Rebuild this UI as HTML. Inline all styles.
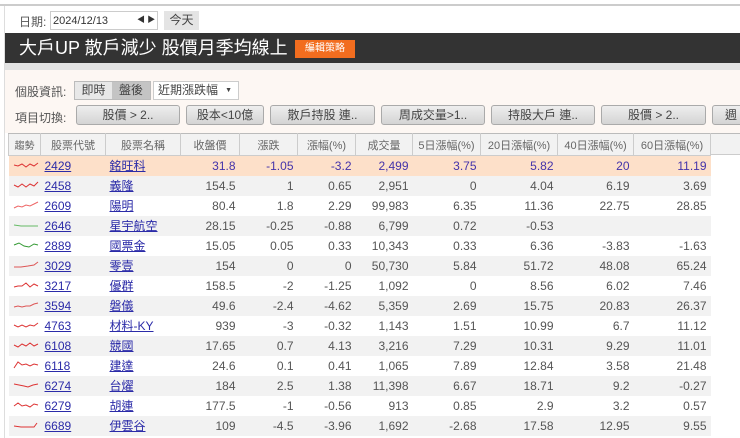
<!DOCTYPE html>
<html><head><meta charset="utf-8">
<style>
*{margin:0;padding:0;box-sizing:border-box}
body{width:740px;height:438px;overflow:hidden;background:#fff;font-family:"Liberation Sans","Noto Sans CJK TC",sans-serif;position:relative;color:#555}
.abs{position:absolute}
.btn{position:absolute;top:105px;height:20px;border:1px solid #aaa;border-radius:3px;background:linear-gradient(#eee,#d4d4d4);font-size:12px;color:#444;text-align:center;line-height:18px}
table{position:absolute;left:8px;top:133px;border-collapse:collapse;font-size:12px;table-layout:fixed;width:702px}
td,th{height:20px;padding:0 4px;white-space:nowrap;overflow:hidden}
th{font-weight:normal;color:#666;background:#f2f2f2;border:1px solid #ccc;border-top:1px solid #bbb;height:22px;text-align:center;font-size:11px;padding:0 1px}
td{text-align:right;color:#555}
td.c{text-align:left}
a{color:#2b2ba8;text-decoration:underline}
tr.g td{background:#f2f2f2}
tr.h td{background:#fde0c9;color:#4433aa}
</style></head><body>
<div class="abs" style="left:0;top:4px;width:740px;height:2px;background:#ccc"></div>
<div class="abs" style="left:4px;top:6px;width:1px;height:432px;background:#ddd"></div>
<div class="abs" style="left:19px;top:13px;font-size:12px;color:#555">日期:</div>
<div class="abs" style="left:50px;top:11px;width:108px;height:19px;border:1px solid #ccc;font-size:11px;color:#333;padding:3px 2px">2024/12/13<span style="position:absolute;left:86px;top:2px;font-size:8px">◀ ▶</span></div>
<div class="abs" style="left:164px;top:11px;width:35px;height:19px;background:#e4e4e4;font-size:12px;color:#444;text-align:center;line-height:19px">今天</div>
<div class="abs" style="left:5px;top:33px;width:735px;height:30px;background:#333"></div>
<div class="abs" style="left:19px;top:37px;font-size:18px;color:#fff;line-height:22px">大戶UP 散戶減少 股價月季均線上</div>
<div class="abs" style="left:295px;top:40px;width:60px;height:18px;background:#f26d1f;font-size:10px;color:#fff;text-align:center;line-height:18px">編輯策略</div>
<div class="abs" style="left:5px;top:63px;width:735px;height:7px;background:#e2e2e2"></div>
<div class="abs" style="left:5px;top:70px;width:735px;height:63px;background:#fdf7f3"></div>
<div class="abs" style="left:15px;top:83px;font-size:12px;color:#555">個股資訊:</div>
<div class="abs" style="left:74px;top:81px;width:77px;height:19px;border:1px solid #bbb;background:#e8e8e8;font-size:12px;color:#444;line-height:17px"><span style="display:inline-block;width:37px;text-align:center">即時</span><span style="display:inline-block;width:38px;text-align:center;background:#c4c4c4">盤後</span></div>
<div class="abs" style="left:153px;top:81px;width:86px;height:19px;border:1px solid #ccc;background:#fff;font-size:12px;color:#444;line-height:17px;padding-left:4px">近期漲跌幅<span style="position:absolute;right:6px;font-size:7px">▼</span></div>
<div class="abs" style="left:15px;top:109px;font-size:12px;color:#555">項目切換:</div>
<div class="btn" style="left:76px;width:104px">股價 &gt; 2..</div>
<div class="btn" style="left:186px;width:78px">股本&lt;10億</div>
<div class="btn" style="left:270px;width:105px">散戶持股 連..</div>
<div class="btn" style="left:381px;width:104px">周成交量&gt;1..</div>
<div class="btn" style="left:491px;width:104px">持股大戶 連..</div>
<div class="btn" style="left:601px;width:105px">股價 &gt; 2..</div>
<div class="btn" style="left:712px;width:40px;text-align:left;padding-left:12px">週</div>
<div class="abs" style="left:710px;top:133px;width:30px;height:22px;background:#f2f2f2;border-top:1px solid #bbb;border-bottom:1px solid #ccc"></div>
<table>
<colgroup><col style="width:32px"><col style="width:65px"><col style="width:75px"><col style="width:59px"><col style="width:58px"><col style="width:58px"><col style="width:57px"><col style="width:68px"><col style="width:77px"><col style="width:76px"><col style="width:77px"></colgroup>
<tr><th style="font-size:10px">趨勢</th><th>股票代號</th><th>股票名稱</th><th>收盤價</th><th>漲跌</th><th>漲幅(%)</th><th>成交量</th><th>5日漲幅(%)</th><th>20日漲幅(%)</th><th>40日漲幅(%)</th><th>60日漲幅(%)</th></tr>
<tr class="h"><td class="c"><svg width="26" height="10"><polyline fill="none" stroke="#d33" points="1,5 5,6 9,4 13,7 17,4 21,6 25,3"/></svg></td><td class="c"><a>2429</a></td><td class="c"><a>銘旺科</a></td><td>31.8</td><td>-1.05</td><td>-3.2</td><td>2,499</td><td>3.75</td><td>5.82</td><td>20</td><td>11.19</td></tr>
<tr class="g"><td class="c"><svg width="26" height="10"><polyline fill="none" stroke="#d33" points="1,5 5,7 9,4 13,7 17,4 21,6 25,2"/></svg></td><td class="c"><a>2458</a></td><td class="c"><a>義隆</a></td><td>154.5</td><td>1</td><td>0.65</td><td>2,951</td><td>0</td><td>4.04</td><td>6.19</td><td>3.69</td></tr>
<tr><td class="c"><svg width="26" height="10"><polyline fill="none" stroke="#e66" points="1,8 5,6 9,7 13,5 17,6 21,4 25,2"/></svg></td><td class="c"><a>2609</a></td><td class="c"><a>陽明</a></td><td>80.4</td><td>1.8</td><td>2.29</td><td>99,983</td><td>6.35</td><td>11.36</td><td>22.75</td><td>28.85</td></tr>
<tr class="g"><td class="c"><svg width="26" height="10"><polyline fill="none" stroke="#6b6" points="1,5 8,6 15,6 25,6"/></svg></td><td class="c"><a>2646</a></td><td class="c"><a>星宇航空</a></td><td>28.15</td><td>-0.25</td><td>-0.88</td><td>6,799</td><td>0.72</td><td>-0.53</td><td></td><td></td></tr>
<tr><td class="c"><svg width="26" height="10"><polyline fill="none" stroke="#393" points="1,5 6,3 11,6 16,7 21,4 25,5"/></svg></td><td class="c"><a>2889</a></td><td class="c"><a>國票金</a></td><td>15.05</td><td>0.05</td><td>0.33</td><td>10,343</td><td>0.33</td><td>6.36</td><td>-3.83</td><td>-1.63</td></tr>
<tr class="g"><td class="c"><svg width="26" height="10"><polyline fill="none" stroke="#d55" points="1,7 8,7 15,6 21,5 25,2"/></svg></td><td class="c"><a>3029</a></td><td class="c"><a>零壹</a></td><td>154</td><td>0</td><td>0</td><td>50,730</td><td>5.84</td><td>51.72</td><td>48.08</td><td>65.24</td></tr>
<tr><td class="c"><svg width="26" height="10"><polyline fill="none" stroke="#d33" points="1,7 5,6 9,6 13,3 17,7 21,4 25,6"/></svg></td><td class="c"><a>3217</a></td><td class="c"><a>優群</a></td><td>158.5</td><td>-2</td><td>-1.25</td><td>1,092</td><td>0</td><td>8.56</td><td>6.02</td><td>7.46</td></tr>
<tr class="g"><td class="c"><svg width="26" height="10"><polyline fill="none" stroke="#d55" points="1,7 5,6 9,7 13,6 17,6 21,4 25,3"/></svg></td><td class="c"><a>3594</a></td><td class="c"><a>磐儀</a></td><td>49.6</td><td>-2.4</td><td>-4.62</td><td>5,359</td><td>2.69</td><td>15.75</td><td>20.83</td><td>26.37</td></tr>
<tr><td class="c"><svg width="26" height="10"><polyline fill="none" stroke="#d33" points="1,5 5,7 9,5 13,7 17,5 21,6 25,3"/></svg></td><td class="c"><a>4763</a></td><td class="c"><a>材料-KY</a></td><td>939</td><td>-3</td><td>-0.32</td><td>1,143</td><td>1.51</td><td>10.99</td><td>6.7</td><td>11.12</td></tr>
<tr class="g"><td class="c"><svg width="26" height="10"><polyline fill="none" stroke="#d33" points="1,5 5,7 9,4 13,6 17,3 21,6 25,4"/></svg></td><td class="c"><a>6108</a></td><td class="c"><a>競國</a></td><td>17.65</td><td>0.7</td><td>4.13</td><td>3,216</td><td>7.29</td><td>10.31</td><td>9.29</td><td>11.01</td></tr>
<tr><td class="c"><svg width="26" height="10"><polyline fill="none" stroke="#d33" points="1,8 5,2 9,5 13,4 17,6 21,4 25,5"/></svg></td><td class="c"><a>6118</a></td><td class="c"><a>建達</a></td><td>24.6</td><td>0.1</td><td>0.41</td><td>1,065</td><td>7.89</td><td>12.84</td><td>3.58</td><td>21.48</td></tr>
<tr class="g"><td class="c"><svg width="26" height="10"><polyline fill="none" stroke="#d33" points="1,4 6,5 11,6 15,7 20,5 25,4"/></svg></td><td class="c"><a>6274</a></td><td class="c"><a>台燿</a></td><td>184</td><td>2.5</td><td>1.38</td><td>11,398</td><td>6.67</td><td>18.71</td><td>9.2</td><td>-0.27</td></tr>
<tr><td class="c"><svg width="26" height="10"><polyline fill="none" stroke="#d33" points="1,6 5,3 9,6 13,5 17,7 21,4 25,5"/></svg></td><td class="c"><a>6279</a></td><td class="c"><a>胡連</a></td><td>177.5</td><td>-1</td><td>-0.56</td><td>913</td><td>0.85</td><td>2.9</td><td>3.2</td><td>0.57</td></tr>
<tr class="g"><td class="c"><svg width="26" height="10"><polyline fill="none" stroke="#d33" points="1,6 8,7 15,7 21,7 24,3"/></svg></td><td class="c"><a>6689</a></td><td class="c"><a>伊雲谷</a></td><td>109</td><td>-4.5</td><td>-3.96</td><td>1,692</td><td>-2.68</td><td>17.58</td><td>12.95</td><td>9.55</td></tr>
</table>
</body></html>
